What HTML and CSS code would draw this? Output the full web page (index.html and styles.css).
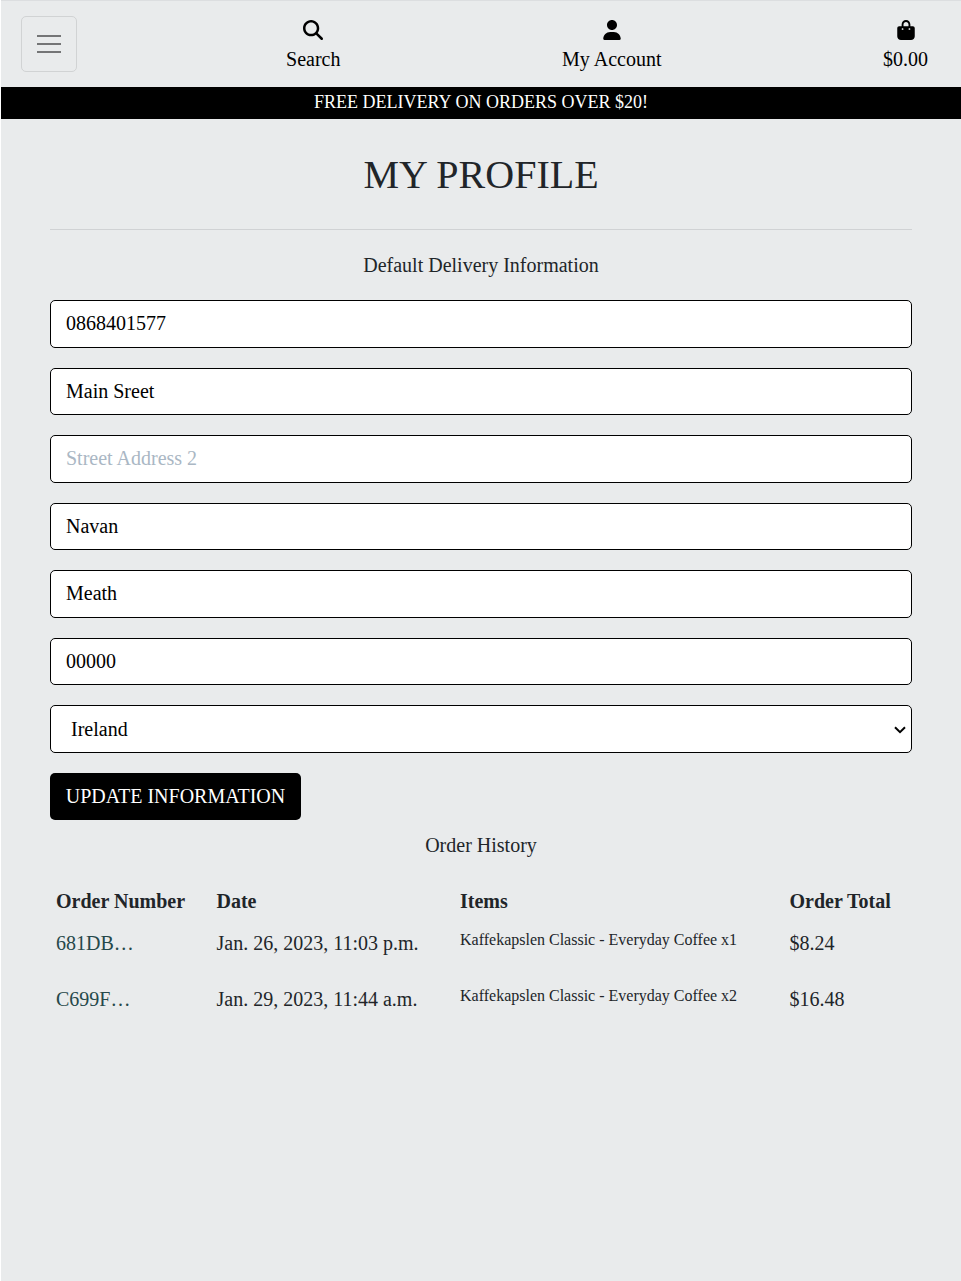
FILE: index.html
```
<!DOCTYPE html>
<html lang="en">
<head>
<meta charset="utf-8">
<title>My Profile</title>
<link rel="stylesheet" href="styles.css">
</head>
<body>
<div class="page">
  <header class="topbar">
    <button class="toggler" type="button" aria-label="Toggle navigation">
      <svg width="30" height="30" viewBox="0 0 30 30"><path stroke="rgba(0,0,0,.5)" stroke-width="2" stroke-linecap="butt" d="M3 7h24M3 15h24M3 23h24"/></svg>
    </button>
    <a class="nav-item">
      <svg width="20" height="20" viewBox="0 0 512 512"><path d="M416 208c0 45.900-14.900 88.300-40 122.700L502.600 457.400c12.500 12.500 12.500 32.800 0 45.300s-32.800 12.500-45.300 0L330.700 376c-34.400 25.200-76.800 40-122.700 40C93.100 416 0 322.900 0 208S93.100 0 208 0S416 93.100 416 208zM208 352c79.500 0 144-64.500 144-144s-64.500-144-144-144S64 128.500 64 208s64.500 144 144 144z"/></svg>
      <span>Search</span>
    </a>
    <a class="nav-item">
      <svg width="18" height="20" viewBox="0 0 448 512"><path d="M224 256c70.700 0 128-57.300 128-128S294.700 0 224 0S96 57.300 96 128s57.300 128 128 128zm-45.700 48C79.800 304 0 383.800 0 482.300C0 498.700 13.300 512 29.700 512H418.300c16.400 0 29.700-13.300 29.700-29.700C448 383.800 368.200 304 269.700 304H178.300z"/></svg>
      <span>My Account</span>
    </a>
    <a class="nav-item">
      <svg width="18" height="20" viewBox="0 0 448 512"><path d="M160 112c0-35.300 28.700-64 64-64s64 28.700 64 64v48H160V112zm-48 48H48c-26.500 0-48 21.500-48 48V416c0 53 43 96 96 96H352c53 0 96-43 96-96V208c0-26.500-21.500-48-48-48H336V112C336 50.100 285.900 0 224 0S112 50.100 112 112v48zm24 96c-13.300 0-24-10.700-24-24s10.700-24 24-24s24 10.700 24 24s-10.700 24-24 24zm200-24c0 13.300-10.700 24-24 24s-24-10.700-24-24s10.700-24 24-24s24 10.700 24 24z"/></svg>
      <span>$0.00</span>
    </a>
  </header>
  <div class="banner">FREE DELIVERY ON ORDERS OVER $20!</div>
  <main class="content">
    <h1 class="title">MY PROFILE</h1>
    <p class="subtitle">Default Delivery Information</p>
    <form class="form">
      <input class="field" type="text" value="0868401577">
      <input class="field" type="text" value="Main Sreet">
      <input class="field" type="text" placeholder="Street Address 2">
      <input class="field" type="text" value="Navan">
      <input class="field" type="text" value="Meath">
      <input class="field" type="text" value="00000">
      <div class="field select">
        <span>Ireland</span>
        <svg width="12" height="10" viewBox="0 0 12 10"><path d="M1 3.300L6 8.200L11 3.300" fill="none" stroke="#000" stroke-width="2"/></svg>
      </div>
      <button class="submit" type="button">UPDATE INFORMATION</button>
    </form>
    <p class="subtitle history">Order History</p>
    <table class="orders">
      <thead>
        <tr><th class="c-num">Order Number</th><th class="c-date">Date</th><th class="c-items">Items</th><th>Order Total</th></tr>
      </thead>
      <tbody>
        <tr><td class="order-link">681DB…</td><td>Jan. 26, 2023, 11:03 p.m.</td><td class="item">Kaffekapslen Classic - Everyday Coffee x1</td><td>$8.24</td></tr>
        <tr><td class="order-link">C699F…</td><td>Jan. 29, 2023, 11:44 a.m.</td><td class="item">Kaffekapslen Classic - Everyday Coffee x2</td><td>$16.48</td></tr>
      </tbody>
    </table>
  </main>
</div>
</body>
</html>
```
FILE: styles.css
```
* {
  box-sizing: border-box;
}

body {
  margin: 0;
  background: #fff;
  color: #212529;
  font: 20px/30px "Liberation Serif", "Times New Roman", serif;
}

.page {
  min-height: 1281px;
  margin-left: 1px;
  background: #e9ebec;
  border-top: 1px solid #dcdee0;
}

.topbar {
  display: flex;
  justify-content: space-between;
  align-items: flex-start;
  height: 86px;
  padding: 15px 33px 0 20px;
}

.toggler {
  display: flex;
  align-items: center;
  justify-content: center;
  width: 56px;
  height: 56px;
  margin-right: -12.5px;
  padding: 0;
  background: none;
  border: 1px solid #d1d3d4;
  border-radius: 5px;
}

.nav-item {
  display: flex;
  flex-direction: column;
  align-items: center;
  padding-top: 4px;
  color: #000;
}

.nav-item span {
  margin-top: 4px;
}

.banner {
  height: 32px;
  background: #000;
  color: #fff;
  font-size: 18px;
  line-height: 31px;
  text-align: center;
}

.content {
  padding: 0 49px;
}

.title {
  height: 111px;
  margin: 0;
  padding-top: 32px;
  border-bottom: 1px solid #d0d2d4;
  font-size: 40px;
  font-weight: 400;
  line-height: 48px;
  text-align: center;
}

.subtitle {
  margin: 20px 0;
  text-align: center;
}

.form {
  display: flex;
  flex-direction: column;
  align-items: flex-start;
  gap: 20px;
}

.field {
  width: 100%;
  height: 47.5px;
  padding: 0 15px;
  background: #fff;
  border: 1px solid #000;
  border-radius: 5px;
  color: #000;
  font: inherit;
}

.field::placeholder {
  color: #aab7c4;
  opacity: 1;
}

.select {
  display: flex;
  align-items: center;
  justify-content: space-between;
  padding: 0 5px 0 20px;
}

.submit {
  width: 251px;
  height: 47.5px;
  padding: 0;
  background: #000;
  border: 0;
  border-radius: 5px;
  color: #fff;
  font: inherit;
}

.history {
  margin: 10px 0 21px;
}

.orders {
  width: 100%;
  border-collapse: collapse;
  table-layout: fixed;
}

.orders th {
  height: 41px;
  padding: 5px 5px 6px;
  text-align: left;
}

.orders td {
  height: 56px;
  padding: 6px 5px;
  vertical-align: top;
  white-space: nowrap;
}

.orders th:first-child,
.orders td:first-child {
  padding-left: 6px;
}

.c-num {
  width: 161.5px;
}

.c-date {
  width: 243.5px;
}

.c-items {
  width: 329.5px;
}

.orders .item {
  font-size: 16px;
  line-height: 24px;
}

.orders .order-link {
  color: #26484a;
}
```
